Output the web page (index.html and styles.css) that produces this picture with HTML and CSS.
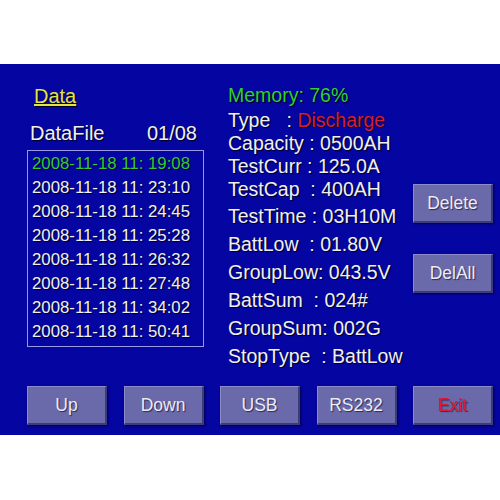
FILE: index.html
```html
<!doctype html>
<html>
<head>
<meta charset="utf-8">
<title>DataFile</title>
<link rel="stylesheet" href="styles.css">
</head>
<body>

<div class="screen">
 <div class="main">

  <div class="files">
   <div class="title">Data</div>
   <div class="filehead"><span>DataFile</span><span>01/08</span></div>
   <div class="filelist">
    <div class="file current">2008-11-18 11: 19:08</div>
    <div class="file">2008-11-18 11: 23:10</div>
    <div class="file">2008-11-18 11: 24:45</div>
    <div class="file">2008-11-18 11: 25:28</div>
    <div class="file">2008-11-18 11: 26:32</div>
    <div class="file">2008-11-18 11: 27:48</div>
    <div class="file">2008-11-18 11: 34:02</div>
    <div class="file">2008-11-18 11: 50:41</div>
   </div>
  </div>

  <div class="info">
   <div class="tight">
    <div class="row memory">Memory: 76%</div>
    <div class="row">Type   : <span class="red">Discharge</span></div>
    <div class="row">Capacity : 0500AH</div>
    <div class="row">TestCurr : 125.0A</div>
    <div class="row">TestCap  : 400AH</div>
   </div>
   <div class="loose">
    <div class="row">TestTime : 03H10M</div>
    <div class="row">BattLow  : 01.80V</div>
    <div class="row">GroupLow: 043.5V</div>
    <div class="row">BattSum  : 024#</div>
    <div class="row">GroupSum: 002G</div>
    <div class="row">StopType  : BattLow</div>
   </div>
  </div>

  <div class="side">
   <div class="btn">Delete</div>
   <div class="btn">DelAll</div>
  </div>

 </div>

 <div class="bottom">
  <div class="btn">Up</div>
  <div class="btn">Down</div>
  <div class="btn">USB</div>
  <div class="btn">RS232</div>
  <div class="btn exit">Exit</div>
 </div>
</div>

</body>
</html>
```

FILE: styles.css
```css
body {
	margin: 0;
	background: #fff;
	font-family: "Liberation Sans", Arial, sans-serif;
}

.screen {
	margin-top: 64px;
	height: 371px;
	box-sizing: border-box;
	padding: 20px 7px 0 27px;
	background: #0505a2;
	color: #f0f0f4;
	text-shadow: 1px 1px 1px #000018;
	display: flex;
	flex-direction: column;
}

.main {
	display: flex;
	height: 302px;
}

/* left column: file list */
.files { width: 177px; }

.title {
	font-size: 20px;
	line-height: 24px;
	padding-left: 7px;
	color: #e2e24a;
	text-decoration: underline;
}

.filehead {
	display: flex;
	justify-content: space-between;
	margin-top: 13px;
	padding: 0 7px 0 3px;
	font-size: 20px;
	line-height: 24px;
}

.filelist {
	margin-top: 5px;
	border: 1px solid #9a9ae0;
	padding: 1px 0 2px 4px;
}

.file {
	font-size: 16.8px;
	line-height: 24px;
	white-space: pre;
}

.file.current { color: #34c834; }

/* middle column: record details */
.info {
	margin-left: 24px;
	font-size: 19.5px;
}

.info .row { white-space: pre; }

.tight .row { line-height: 23px; }
.tight .memory { margin-bottom: 2px; color: #30d030; }
.loose { margin-top: 1px; }
.loose .row { line-height: 28px; }

.red { color: #d81c34; }

/* right column */
.side {
	margin-left: auto;
	padding-top: 100px;
	display: flex;
	flex-direction: column;
	gap: 31px;
}

.bottom {
	display: flex;
	justify-content: space-between;
}

.btn {
	width: 80px;
	height: 39px;
	box-sizing: border-box;
	background: #6a6aaa;
	border-top: 1px solid #8c8cc8;
	border-left: 1px solid #8c8cc8;
	border-right: 2px solid #3c3c7c;
	border-bottom: 2px solid #3c3c7c;
	box-shadow: 1px 1px 2px rgba(0,0,30,0.7);
	font-size: 17.5px;
	line-height: 36px;
	text-align: center;
	color: #ececf4;
	text-shadow: 1px 1px 1px #2a2a5a;
}

.btn.exit { color: #d81c34; }
```
